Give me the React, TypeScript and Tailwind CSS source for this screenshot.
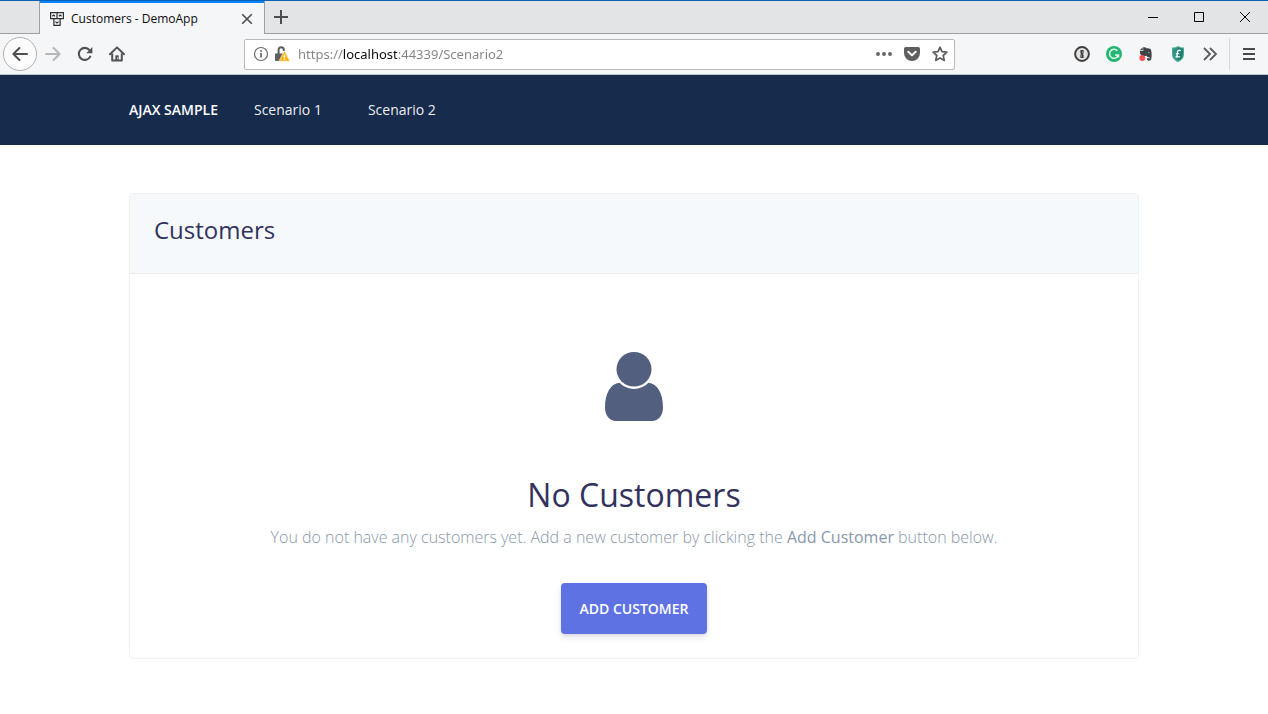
import type { ReactNode } from "react";

function ToolButton({ label, children, className = "" }: { label: string; children: ReactNode; className?: string }) {
  return (
    <button type="button" aria-label={label} className={`flex h-8 w-8 shrink-0 items-center justify-center text-[#5a5b5c] ${className}`}>
      {children}
    </button>
  );
}

function FaviconIcon() {
  return (
    <svg width="14" height="14" viewBox="0 0 14 14" fill="none" stroke="#2e2e33" strokeWidth="1.2" aria-hidden="true">
      <path d="M.6.6h12.8v6H.6zM7 .6v6M3.9 6.6h6.2v6.8H3.9z" />
      <path d="M2.2 4.2 3.6 3l1.4 1.2M8.8 4.2 10.2 3l1.4 1.2M5.4 9.6 7 11l1.6-1.4" />
    </svg>
  );
}

function TabStrip() {
  return (
    <div className="flex h-[34px] border-t border-[#0a64ad] bg-[#e3e4e6]">
      <div className="w-10 border-r border-b border-[#a0a0a2]" />
      <div className="flex w-[224px] items-center border-t-2 border-[#0a84ff] bg-[#f5f6f7] pr-[11px] pl-[10px]">
        <FaviconIcon />
        <span className="ml-[7px] flex-1 font-['Open_Sans',sans-serif] text-[12px] leading-4 whitespace-nowrap text-[#0c0c0d]">
          Customers - DemoApp
        </span>
        <button type="button" aria-label="Close tab" className="flex h-3 w-3 items-center justify-center">
          <svg width="12" height="12" viewBox="0 0 12 12" stroke="#4c4d4f" strokeWidth="1.6">
            <path d="m1.2 1.2 9.6 9.6M10.8 1.2 1.2 10.8" />
          </svg>
        </button>
      </div>
      <div className="flex flex-1 items-center border-b border-l border-[#a0a0a2]">
        <button type="button" aria-label="New tab" className="flex h-8 w-8 items-center justify-center">
          <svg width="14" height="14" viewBox="0 0 14 14" stroke="#4c4d4f" strokeWidth="2">
            <path d="M7 0v14M0 7h14" />
          </svg>
        </button>
        <div className="ml-auto flex h-full">
          <button type="button" aria-label="Minimize" className="flex w-[46px] items-center justify-center">
            <svg width="10" height="11" viewBox="0 0 10 11" stroke="#000">
              <path d="M0 5.5h10" />
            </svg>
          </button>
          <button type="button" aria-label="Maximize" className="flex w-[46px] items-center justify-center">
            <svg width="10" height="10" viewBox="0 0 10 10" stroke="#000" fill="none">
              <path d="M.5.5h9v9h-9z" />
            </svg>
          </button>
          <button type="button" aria-label="Close window" className="flex w-[46px] items-center justify-center">
            <svg width="10" height="10" viewBox="0 0 10 10" stroke="#000">
              <path d="m0 0 10 10M10 0 0 10" />
            </svg>
          </button>
        </div>
      </div>
    </div>
  );
}

function AddressBar() {
  return (
    <div className="flex h-[31px] max-w-[711px] flex-1 items-center rounded-[2px] border border-[#b9b9ba] bg-white pl-2">
      <button type="button" aria-label="Site information" className="flex h-4 w-4 items-center justify-center">
        <svg width="16" height="16" viewBox="0 0 16 16" fill="none" stroke="#6a6a6c">
          <circle cx="8" cy="8" r="6.5" strokeWidth="1.2" />
          <path d="M8 7v4.5" strokeWidth="1.8" />
          <circle cx="8" cy="4.9" r="1" fill="#6a6a6c" stroke="none" />
        </svg>
      </button>
      <button type="button" aria-label="Connection is not fully secure" className="ml-[5px] flex h-4 w-4 items-center justify-center">
        <svg width="16" height="16" viewBox="0 0 16 16" fill="none">
          <path d="M4.600 8V3.800a2.600 2.600 0 0 1 5.200 0V5" stroke="#5f5f61" strokeWidth="2" />
          <path d="M1 7.500h8.500v7.500H2a1 1 0 0 1-1-1z" fill="#5f5f61" />
          <path d="M9.800 5.800a.8.8 0 0 1 1.300 0l4.300 8.300a.8.8 0 0 1-.7 1.200H6.200a.8.8 0 0 1-.7-1.200z" fill="#ffb50f" stroke="#fff" strokeWidth=".6" />
          <path d="M10.400 8.800v3M10.400 12.700v1.300" stroke="#fff" strokeWidth="1.400" />
        </svg>
      </button>
      <input
        type="text"
        aria-label="Address"
        defaultValue="https://localhost:44339/Scenario2"
        className="ml-2 h-7 min-w-0 flex-1 bg-[linear-gradient(90deg,#838385_45px,#0c0c0d_45px,#0c0c0d_99px,#838385_99px)] bg-clip-text font-['Noto_Sans',sans-serif] text-[13px] text-transparent outline-none"
      />
      <button type="button" aria-label="Page actions" className="flex h-7 w-7 items-center justify-center">
        <svg width="16" height="16" viewBox="0 0 16 16" fill="#5f5f61">
          <circle cx="2" cy="8" r="1.9" />
          <circle cx="8" cy="8" r="1.9" />
          <circle cx="14" cy="8" r="1.9" />
        </svg>
      </button>
      <button type="button" aria-label="Save to Pocket" className="flex h-7 w-7 items-center justify-center">
        <svg width="16" height="16" viewBox="0 0 16 16" fill="none">
          <path d="M1.8 1h12.4A1.8 1.8 0 0 1 16 2.8V7A8 8 0 0 1 0 7V2.8A1.8 1.8 0 0 1 1.8 1z" fill="#5f5f61" />
          <path d="M4.3 5.8 8 9.3l3.7-3.5" stroke="#fff" strokeWidth="2" strokeLinecap="round" strokeLinejoin="round" />
        </svg>
      </button>
      <button type="button" aria-label="Bookmark this page" className="flex h-7 w-7 items-center justify-center">
        <svg width="16" height="16" viewBox="0 0 16 16" fill="none" stroke="#5f5f61" strokeWidth="1.7" strokeLinejoin="round">
          <path d="m8 1.200 2 4.500 4.900.5-3.700 3.300 1.100 4.900L8 11.900l-4.300 2.500 1.100-4.900L1.100 6.200 6 5.700z" />
        </svg>
      </button>
    </div>
  );
}

function Toolbar() {
  return (
    <div className="flex h-[41px] items-center border-b border-[#c4c5c7] bg-[#f5f6f7] pr-[3px] pl-[3px]">
      <button type="button" aria-label="Back" className="flex h-[34px] w-[34px] shrink-0 items-center justify-center rounded-full border border-[#b0b1b3] bg-[#fcfcfc]">
        <svg width="16" height="16" viewBox="0 0 16 16" fill="none" stroke="#4e4f51" strokeWidth="2" strokeLinecap="round" strokeLinejoin="round">
          <path d="M15 8H1.400M7.400 2 1.400 8l6 6" />
        </svg>
      </button>
      <ToolButton label="Forward">
        <svg width="16" height="16" viewBox="0 0 16 16" fill="none" stroke="#b6b7b8" strokeWidth="2" strokeLinecap="round" strokeLinejoin="round">
          <path d="M1 8h13.600M8.600 2l6 6-6 6" />
        </svg>
      </ToolButton>
      <ToolButton label="Reload">
        <svg width="16" height="16" viewBox="0 0 16 16" fill="none">
          <path d="M13.200 10.600A6 6 0 1 1 12.400 4" stroke="#525355" strokeWidth="2.100" strokeLinecap="round" />
          <path d="M15.400 1v6.200H9.200z" fill="#525355" />
        </svg>
      </ToolButton>
      <ToolButton label="Home">
        <svg width="16" height="16" viewBox="0 0 16 16" fill="none" stroke="#525355" strokeLinejoin="round">
          <path d="M1 8.300 8 1.400l7 6.900" strokeWidth="2" strokeLinecap="round" />
          <path d="M3.200 7.500v7h9.600v-7" strokeWidth="2" />
          <path d="M6.300 15V9.300h3.400V15z" fill="#525355" stroke="none" />
          <path d="M8.600 11.600v1.200" stroke="#f5f6f7" />
        </svg>
      </ToolButton>
      <div className="ml-2 flex flex-1 justify-center">
        <AddressBar />
      </div>
      <div className="ml-2 flex items-center">
        <ToolButton label="1Password">
          <svg width="16" height="16" viewBox="0 0 16 16">
            <circle cx="8" cy="8" r="6.900" fill="#e3e3e3" stroke="#404041" strokeWidth="2" />
            <path d="M6.400 4h3.200v3.200l-.8.9.8.8V12H6.400V8.800l.8-.8-.8-.9z" fill="#404041" />
            <path d="M8.500 5.200v1.600M7.500 9.200v1.600" stroke="#bbb" strokeWidth=".6" />
          </svg>
        </ToolButton>
        <ToolButton label="Grammarly">
          <svg width="16" height="16" viewBox="0 0 16 16" fill="none">
            <circle cx="8" cy="8" r="8" fill="#22b573" />
            <path d="M11.400 4.800A4.500 4.500 0 1 0 12.400 9M9 8.900h3.500v2.600" stroke="#e6f8ee" strokeWidth="1.500" />
          </svg>
        </ToolButton>
        <ToolButton label="Evernote">
          <svg width="16" height="16" viewBox="0 0 16 16">
            <path d="M5.200 1.300c1.700-.4 2.800 0 3.300.9 1.800 0 3.400.2 4 .9 1.300 1.800 1.600 7.600.6 10.500-.6 1.500-3.500 1.500-4 .1-.4-1.300.3-2.200 1.700-2V13c1.100-.2 1.100-1.600.3-1.700-1.700-.4-2.300-.8-2.700-1.600-1.500.7-4.300.5-5.500-.6-.9-1.100-1-2.700-1-4h3.300z" fill="#3d4346" />
            <path d="M1.800 4.300 4.700 1.300v3z" fill="#3d4346" />
            <path d="M10 6.600c.8-.5 1.700-.2 1.800.6z" fill="#f5f6f7" />
            <circle cx="4.300" cy="12" r="2.900" fill="#fc4f50" />
          </svg>
        </ToolButton>
        <ToolButton label="Shopping assistant">
          <svg width="16" height="16" viewBox="0 0 16 16">
            <path d="M8 0c1.700 1.100 3.700 1.500 6 1.500v6.500c0 4-2.300 6.500-6 8-3.700-1.500-6-4-6-8V1.500C4.300 1.500 6.300 1.100 8 0z" fill="#4aa995" />
            <path d="M8 1.300c1.500.9 3 1.200 4.800 1.300v5.300c0 3.300-1.800 5.400-4.800 6.700z" fill="#197c6c" />
            <path d="M8 1.300v13.300C5 13.300 3.200 11.200 3.200 7.900V2.600C5 2.500 6.500 2.200 8 1.300z" fill="#2c9581" />
            <path d="M10.600 5.200C10.300 3.700 8 3.900 7.700 5.500L7 9.700c-.2 1-.9 1.200-1.500 1.200h4.600M5.800 7.600h3.500" fill="none" stroke="#fff" strokeWidth="1.400" />
          </svg>
        </ToolButton>
        <ToolButton label="More tools">
          <svg width="16" height="16" viewBox="0 0 16 16" fill="none" stroke="#5a5b5d" strokeWidth="1.800">
            <path d="m2 2 6 6-6 6M8 2l6 6-6 6" />
          </svg>
        </ToolButton>
        <div className="ml-[3px] h-8 w-px bg-[#d7d8da]" />
        <ToolButton label="Open menu" className="ml-[3px]">
          <svg width="12" height="12" viewBox="0 0 12 12" stroke="#48494b" strokeWidth="2">
            <path d="M0 1h12M0 6h12M0 11h12" />
          </svg>
        </ToolButton>
      </div>
    </div>
  );
}

function SiteNav() {
  return (
    <nav className="bg-[#172b4d] px-6 text-white">
      <div className="mx-auto flex h-[70px] max-w-[1010px] items-center text-[14px] leading-6">
        <a href="#home" className="font-semibold">
          AJAX SAMPLE
        </a>
        <a href="#scenario1" className="ml-9 text-white/95">
          Scenario 1
        </a>
        <a href="#scenario2" className="ml-[46px] text-white/95">
          Scenario 2
        </a>
      </div>
    </nav>
  );
}

export default function App() {
  return (
    <div className="min-h-screen bg-white font-['Open_Sans',sans-serif]">
      <header>
        <TabStrip />
        <Toolbar />
      </header>
      <SiteNav />
      <main className="px-6 py-12">
        <section className="mx-auto max-w-[1010px] rounded-[4px] border border-[#f0f1f2]">
          <div className="border-b border-[#e9ebed] bg-[#f6f9fc] px-6 pt-5 pb-[27px]">
            <h1 className="text-[24px] leading-8 text-[#32325d]">Customers</h1>
          </div>
          <div className="flex flex-col items-center px-6 pt-[78px] pb-6 text-center">
            <svg width="58" height="69" viewBox="0 0 58 70" preserveAspectRatio="none" fill="#525f7f" aria-hidden="true">
              <circle cx="29" cy="17.500" r="17.500" />
              <path d="M14.500 31.200C5.500 32 0 42 0 56.500 0 64 4.500 70 11 70h36c6.500 0 11-6 11-13.500C58 42 52.500 32 43.500 31.200 39.500 35.200 34.500 37.500 29 37.500s-10.500-2.300-14.500-6.300z" />
            </svg>
            <h2 className="mt-[52px] text-[32px] leading-[43px] text-[#32325d]">No Customers</h2>
            <p className="mt-[7px] text-[16px] leading-7 font-light text-[#8898aa]">
              You do not have any customers yet. Add a new customer by clicking the <strong className="font-medium">Add Customer</strong> button below.
            </p>
            <button
              type="button"
              className="mt-8 rounded-[4px] bg-[#5e72e4] px-[19px] py-[14px] text-[14px] leading-[23px] font-semibold text-white shadow-[0_4px_6px_rgba(50,50,93,0.11),0_1px_3px_rgba(0,0,0,0.08)]"
            >
              ADD CUSTOMER
            </button>
          </div>
        </section>
      </main>
    </div>
  );
}
